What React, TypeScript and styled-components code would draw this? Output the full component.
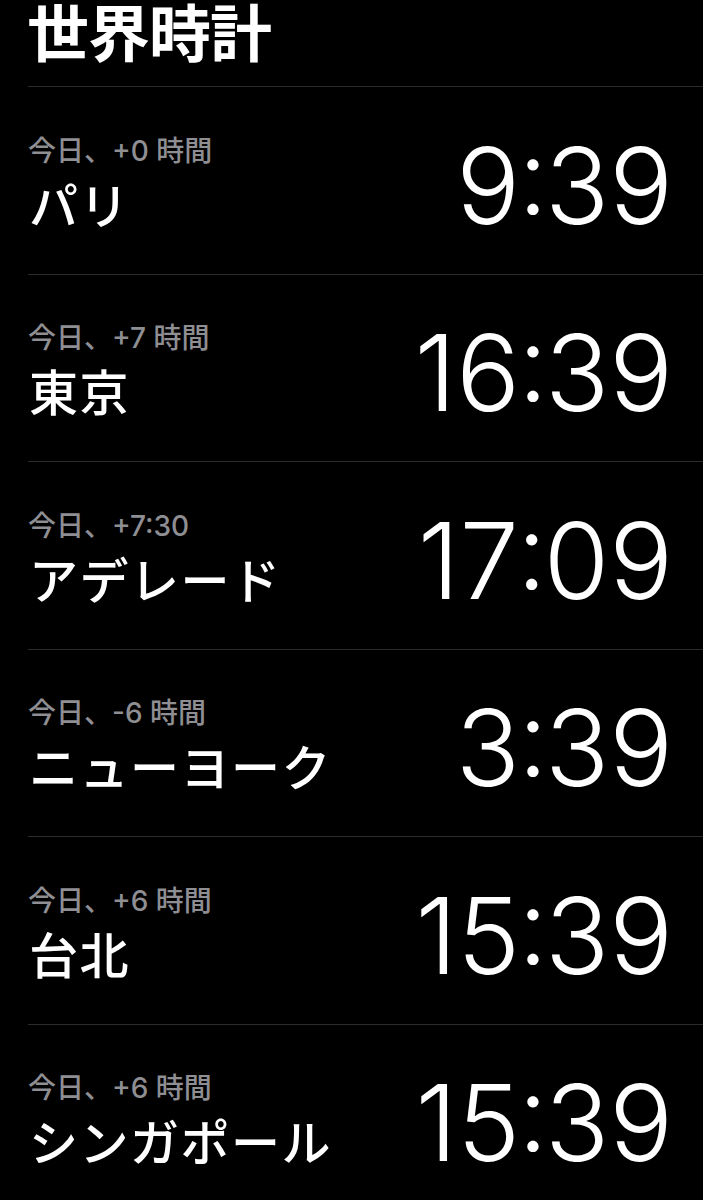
import React from "react";
import styled, { createGlobalStyle } from "styled-components";

const Global = createGlobalStyle`
  html, body {
    margin: 0;
    padding: 0;
    background: #000;
  }
  body {
    font-family: "Noto Sans CJK JP", sans-serif;
    -webkit-font-smoothing: antialiased;
  }
`;

const Screen = styled.div`
  width: 703px;
  height: 1200px;
  overflow: hidden;
  background: #000;
  color: #fff;
`;

const Title = styled.h1`
  margin: 0;
  height: 86px;
  padding-left: 27px;
  font-family: "Noto Sans CJK JP", sans-serif;
  font-size: 62px;
  font-weight: 700;
  line-height: 60px;
  letter-spacing: -1px;
`;

const List = styled.ul`
  list-style: none;
  margin: 0 0 0 28px;
  padding: 0;
`;

const Row = styled.li`
  box-sizing: border-box;
  height: 187.5px;
  border-top: 1px solid #2c2c2e;
  display: flex;
  justify-content: space-between;
  align-items: last baseline;
  padding: 0 30px 35px 0;
`;

const Info = styled.div`
  display: flex;
  flex-direction: column;
`;

const Offset = styled.span`
  font-family: "Inter", "Noto Sans CJK JP", sans-serif;
  font-size: 28px;
  font-weight: 500;
  line-height: 34px;
  margin-bottom: 6px;
  color: #8e8e93;
  white-space: pre;
`;

const City = styled.span`
  font-family: "Noto Sans CJK JP", sans-serif;
  font-size: 49px;
  font-weight: 500;
  line-height: 58px;
  letter-spacing: 1.5px;
  padding-left: 1px;
`;

const Time = styled.span`
  font-family: "Inter", "Roboto", sans-serif;
  font-size: 106px;
  font-weight: 300;
  line-height: 1;
  letter-spacing: 0;
  font-feature-settings: "calt" 0;
`;

const Colon = styled.span`
  display: inline-block;
  margin: 0 -3px 0 -2px;
  transform: translateY(-10px);
`;

type Clock = { offset: string; city: string; time: string };

const clocks: Clock[] = [
  { offset: "今日、+0 時間", city: "パリ", time: "9:39" },
  { offset: "今日、+7 時間", city: "東京", time: "16:39" },
  { offset: "今日、+7:30", city: "アデレード", time: "17:09" },
  { offset: "今日、-6 時間", city: "ニューヨーク", time: "3:39" },
  { offset: "今日、+6 時間", city: "台北", time: "15:39" },
  { offset: "今日、+6 時間", city: "シンガポール", time: "15:39" },
];

function ClockTime({ value }: { value: string }) {
  const [h, m] = value.split(":");
  return (
    <Time>
      {h}
      <Colon>:</Colon>
      {m}
    </Time>
  );
}

export default function App() {
  return (
    <Screen>
      <Global />
      <Title>世界時計</Title>
      <List>
        {clocks.map((c, i) => (
          <Row key={i}>
            <Info>
              <Offset>{c.offset}</Offset>
              <City>{c.city}</City>
            </Info>
            <ClockTime value={c.time} />
          </Row>
        ))}
      </List>
    </Screen>
  );
}
